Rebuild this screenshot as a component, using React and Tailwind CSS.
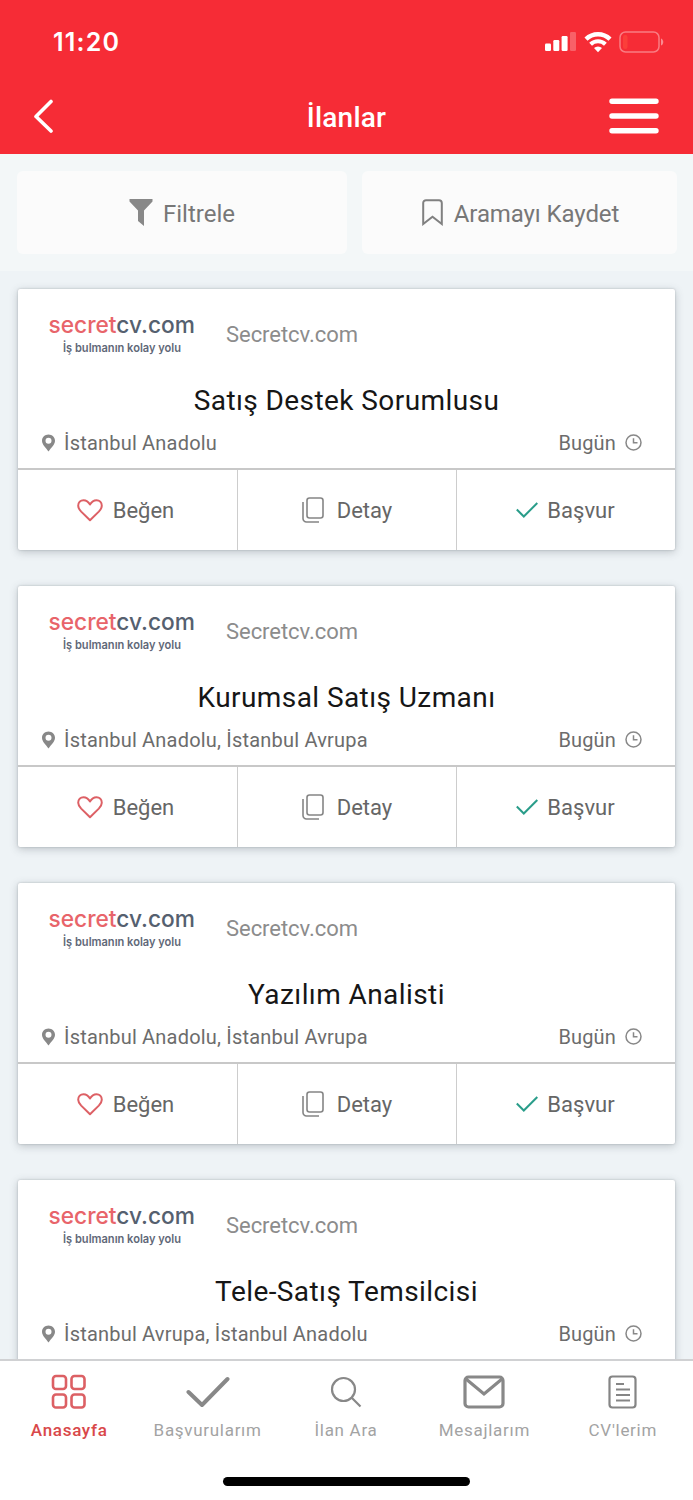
const ilanlar = [
    { id: 1, baslik: 'Satış Destek Sorumlusu', sehir: 'İstanbul Anadolu' },
    { id: 2, baslik: 'Kurumsal Satış Uzmanı', sehir: 'İstanbul Anadolu, İstanbul Avrupa' },
    { id: 3, baslik: 'Yazılım Analisti', sehir: 'İstanbul Anadolu, İstanbul Avrupa' },
    { id: 4, baslik: 'Tele-Satış Temsilcisi', sehir: 'İstanbul Avrupa, İstanbul Anadolu' },
]

function StatusBar() {
    return (
        <div className="flex h-[80px] items-center justify-between pt-[4px] pl-[53px] pr-[29px]">
            <span className="font-['Inter',sans-serif] text-[25px] font-semibold leading-none tracking-[1.2px]">11:20</span>
            <div className="flex items-center">
                <svg width="31" height="20" viewBox="0 0 31 20" fill="currentColor">
                    <rect x="0" y="11.5" width="6" height="7.5" rx="1.2" />
                    <rect x="8.3" y="8" width="6" height="11" rx="1.2" />
                    <rect x="16.6" y="4" width="6" height="15" rx="1.2" />
                    <rect x="25" y="0" width="6" height="19" rx="1.2" opacity="0.25" />
                </svg>
                <svg className="ml-[8px]" width="28" height="21" viewBox="0 0 28 21" fill="none" stroke="currentColor" strokeWidth="4.4">
                    <path d="M2 7.2a17.2 17.2 0 0 1 24 0" />
                    <path d="M6.600 12.200a10.600 10.600 0 0 1 14.800 0" strokeWidth="4" />
                    <path d="M14 20.200l-4-4.100a5.800 5.800 0 0 1 8 0z" fill="currentColor" stroke="none" />
                </svg>
                <svg className="ml-[7px]" width="45" height="22" viewBox="0 0 45 22" fill="none">
                    <rect x="1" y="1" width="39" height="20" rx="5.5" stroke="#fff" strokeOpacity="0.38" strokeWidth="1.5" />
                    <rect x="4" y="4" width="4.5" height="14" rx="2" fill="#fb3f3a" />
                    <path d="M42 7.5c3 1 3 6 0 7z" fill="#fff" fillOpacity="0.45" />
                </svg>
            </div>
        </div>
    )
}

function Header() {
    return (
        <header className="h-[154px] shrink-0 bg-[#f62c36] text-white">
            <StatusBar />
            <div className="grid h-[72px] grid-cols-3 items-center pl-[34px] pr-[34px]">
                <svg width="20" height="34" viewBox="0 0 20 34" fill="none" stroke="currentColor" strokeWidth="3.6" strokeLinecap="round" strokeLinejoin="round">
                    <path d="M17 2.500L2 17.500l15 14.500" />
                </svg>
                <h1 className="pt-[4px] text-center text-[28px] font-medium leading-none tracking-[0.2px]">İlanlar</h1>
                <svg className="justify-self-end" width="50" height="36" viewBox="0 0 50 36" stroke="currentColor" strokeWidth="5.4" strokeLinecap="round">
                    <path d="M3 3.300h44M3 18h44M3 32.700h44" />
                </svg>
            </div>
        </header>
    )
}

function FilterBar() {
    return (
        <div className="flex h-[117px] shrink-0 gap-[15px] bg-[#f3f7f8] pt-[17px] pl-[17px] pr-[16px] text-[#777]">
            <button className="flex h-[83px] w-[330px] items-center justify-center rounded-[6px] bg-[#fbfbfb] text-[24px]">
                <svg className="mr-[10px]" width="24" height="27" viewBox="0 0 24 27" fill="#888">
                    <path d="M0.500 0h23v2.500L15 11.500v15.500l-6-5V11.500L0.500 2.500z" />
                </svg>
                <span className="pt-[2px]">Filtrele</span>
            </button>
            <button className="flex h-[83px] w-[315px] items-center justify-center rounded-[6px] bg-[#fbfbfb] pl-[2px] text-[24px]">
                <svg className="mr-[11px]" width="21" height="27" viewBox="0 0 21 27" fill="none" stroke="#808080" strokeWidth="2">
                    <path d="M1.200 25V4a2.800 2.800 0 0 1 2.800-2.800h13A2.800 2.800 0 0 1 19.800 4v21l-9.300-7.200z" />
                </svg>
                <span className="pt-[2px] tracking-[-0.1px]">Aramayı Kaydet</span>
            </button>
        </div>
    )
}

function Logo() {
    return (
        <svg width="150" height="56" viewBox="0 0 150 56" className="font-['Inter',sans-serif]">
            <text x="0.500" y="24.500" fontSize="23.500" fontWeight="500" textLength="146.500" lengthAdjust="spacingAndGlyphs" fill="#e8646a">
                secret<tspan fill="#55606f">cv.com</tspan>
            </text>
            <text x="15" y="43.500" fontSize="12" fontWeight="600" textLength="118" lengthAdjust="spacingAndGlyphs" fill="#5f6878">İş bulmanın kolay yolu</text>
        </svg>
    )
}

function JobCard({ ilan }) {
    return (
        <article className="flex h-[261px] shrink-0 flex-col rounded-[2px] bg-white shadow-[0_2px_8px_rgba(60,70,80,0.28),0_0_2px_rgba(60,70,80,0.3)]">
            <div className="flex h-[81px] pt-[19px] pl-[30px]">
                <Logo />
                <span className="ml-[28px] mt-[14px] text-[22px] leading-[26px] tracking-[-0.05px] text-[#8c8c8c]">Secretcv.com</span>
            </div>
            <h2 className="h-[60px] pt-[14px] text-center text-[28px] leading-[34px] tracking-[0.42px] text-[#161616]">{ilan.baslik}</h2>
            <div className="flex h-[38px] items-center pb-[12px] pl-[24px] pr-[33px] text-[20px] text-[#6c6c6c]">
                <svg className="mr-[9px]" width="13" height="18" viewBox="0 0 13 18" fill="#888">
                    <path fillRule="evenodd" d="M6.500 0.500C2.900 0.500 0 3.300 0 6.800 0 10.700 4 14 6.500 17.500 9 14 13 10.700 13 6.800 13 3.300 10.100 0.500 6.500 0.500zM6.500 3.800a3 3 0 1 1 0 6 3 3 0 0 1 0-6z" />
                </svg>
                <span className="flex-1 tracking-[0.2px]">{ilan.sehir}</span>
                <span className="tracking-[0.15px]">Bugün</span>
                <svg className="mt-[-1px] ml-[9px]" width="17" height="17" viewBox="0 0 17 17" fill="none" stroke="#888" strokeWidth="1.500">
                    <circle cx="8.500" cy="8.500" r="7.500" />
                    <path d="M8.500 4.200v4.600h4" />
                </svg>
            </div>
            <div className="grid flex-1 grid-cols-[220px_219px_1fr] divide-x divide-[#cdcdcd] border-t-2 border-[#c8c8c8] text-[22px] text-[#666]">
                <button className="flex items-center justify-center pr-[4px]">
                    <svg className="mr-[10px]" width="26" height="23" viewBox="0 0 26 23" fill="none" stroke="#dd6065" strokeWidth="2" strokeLinejoin="round">
                        <path d="M13 5.500C11 2 8.500 1.200 6.500 1.200 3.500 1.200 1.200 3.600 1.200 6.700c0 2.600 1.500 4.300 3 5.900L13 21.300l8.800-8.700c1.500-1.600 3-3.300 3-5.900 0-3.100-2.300-5.500-5.300-5.500-2 0-4.500 0.800-6.500 4.300z" />
                    </svg>
                    <span className="pt-px">Beğen</span>
                </button>
                <button className="flex items-center justify-center">
                    <svg className="mr-[13px]" width="22" height="26" viewBox="0 0 22 26" fill="none" stroke="#858585" strokeWidth="1.600">
                        <rect x="5" y="1" width="16" height="20" rx="2.500" />
                        <path d="M1 5v16.500A3.500 3.500 0 0 0 4.500 25H17" />
                    </svg>
                    <span className="pt-px">Detay</span>
                </button>
                <button className="flex items-center justify-center pr-px">
                    <svg className="mr-[9px]" width="22" height="16" viewBox="0 0 22 16" fill="none" stroke="#2a9d8a" strokeWidth="2">
                        <path d="M0.800 7.500l7 7L21.300 1" />
                    </svg>
                    <span className="pt-px">Başvur</span>
                </button>
            </div>
        </article>
    )
}

function TabItem({ label, active, children }) {
    return (
        <button className={`flex h-full flex-1 flex-col items-center text-[17px] tracking-[0.7px] ${active ? 'font-medium text-[#d9484a]' : 'text-[#a3a3a3]'}`}>
            <span className="flex h-[61px] items-center">{children}</span>
            <span className="mt-[-2px] leading-[20px]">{label}</span>
        </button>
    )
}

function TabBar() {
    return (
        <nav className="h-[141px] shrink-0 border-t-2 border-[#d0d1d3] bg-white">
            <div className="mr-px flex h-[100px]">
                <TabItem label="Anasayfa" active>
                    <svg width="36" height="36" viewBox="0 0 36 36" fill="none" stroke="#dc6064" strokeWidth="2.600">
                        <rect x="2" y="2" width="13" height="13" rx="3" />
                        <rect x="20.500" y="2" width="13" height="13" rx="3" />
                        <rect x="2" y="20.500" width="13" height="13" rx="3" />
                        <rect x="20.500" y="20.500" width="13" height="13" rx="3" />
                    </svg>
                </TabItem>
                <TabItem label="Başvurularım">
                    <svg width="44" height="32" viewBox="0 0 44 32" fill="none" stroke="#888" strokeWidth="4" strokeLinecap="round" strokeLinejoin="round">
                        <path d="M2.500 16L16 29 41.500 3" />
                    </svg>
                </TabItem>
                <TabItem label="İlan Ara">
                    <svg width="32" height="32" viewBox="0 0 32 32" fill="none" stroke="#888" strokeWidth="2.200">
                        <circle cx="13.500" cy="13.500" r="11.500" />
                        <path d="M21.500 21.500l9 9" />
                    </svg>
                </TabItem>
                <TabItem label="Mesajlarım">
                    <svg width="42" height="34" viewBox="0 0 42 34" fill="none" stroke="#888" strokeWidth="3.200">
                        <rect x="2" y="2" width="38" height="30" rx="3.500" />
                        <path d="M3 4l18 15L39 4" />
                    </svg>
                </TabItem>
                <TabItem label="CV'lerim">
                    <svg width="29" height="34" viewBox="0 0 29 34" fill="none" stroke="#858585" strokeWidth="2.200">
                        <rect x="1.500" y="1.500" width="26" height="31" rx="3" />
                        <path d="M8 9h8M8 14.500h14M8 20h14M8 25.500h14" />
                    </svg>
                </TabItem>
            </div>
            <div className="mx-auto mt-[16px] h-[9px] w-[247px] rounded-full bg-black" />
        </nav>
    )
}

function App() {
    return (
        <div className="flex h-[1500px] w-[693px] flex-col overflow-hidden bg-[#eef3f6] font-['Roboto',sans-serif]">
            <Header />
            <FilterBar />
            <main className="flex min-h-0 flex-1 flex-col gap-[36px] overflow-hidden pt-[18px] pl-[18px] pr-[18px]">
                {ilanlar.map((ilan) => (
                    <JobCard key={ilan.id} ilan={ilan} />
                ))}
            </main>
            <TabBar />
        </div>
    )
}

export default App
